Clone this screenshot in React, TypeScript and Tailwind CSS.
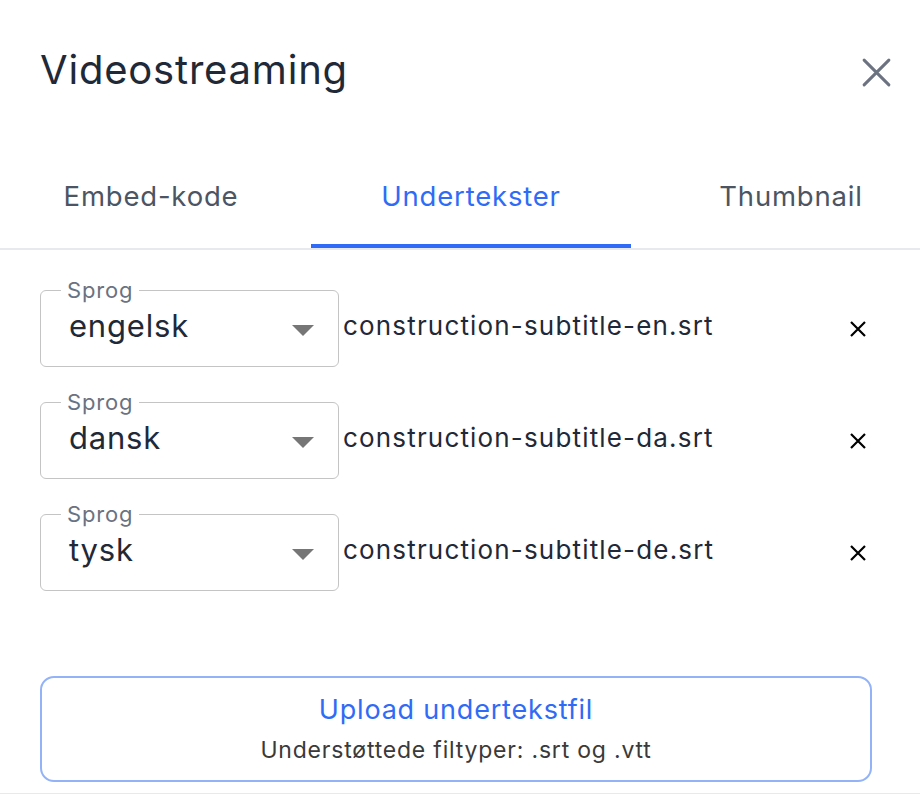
import React, { useState } from 'react';

const rows = [
  { lang: 'engelsk', file: 'construction-subtitle-en.srt' },
  { lang: 'dansk', file: 'construction-subtitle-da.srt' },
  { lang: 'tysk', file: 'construction-subtitle-de.srt' },
];

const tabs = ['Embed-kode', 'Undertekster', 'Thumbnail'];

export default function App() {
  const [active, setActive] = useState(1);

  return (
    <div className="w-[920px] h-[794px] bg-white overflow-hidden font-['Inter',sans-serif] tracking-[0.05em] text-[#1f2937]">
      <div className="flex items-center justify-between pl-10 pr-[22px] h-[144px]">
        <h2 className="text-[40px] leading-none -mt-1">Videostreaming</h2>
        <button className="w-11 h-11 flex items-center justify-center text-[#6b7280]">
          <svg width="33" height="33" viewBox="0 0 24 24" fill="none" stroke="currentColor" strokeWidth="2.2" strokeLinecap="round">
            <path d="M3 3l18 18M21 3L3 21" />
          </svg>
        </button>
      </div>

      <div className="border-b-2 border-[#e8e9ee] overflow-hidden">
        <div className="flex -ml-[9px] w-[960px]">
          {tabs.map((t, i) => (
            <button
              key={t}
              onClick={() => setActive(i)}
              className={`w-[320px] shrink-0 h-[104px] pt-[6px] text-[27.5px] flex items-center justify-center border-b-4 ${
                i === active ? 'text-[#2f6bf6] border-[#2f6bf6]' : 'text-[#4b5563] border-transparent'
              }`}
            >
              {t}
            </button>
          ))}
        </div>
      </div>

      <div className="pl-10 pr-[50px] pt-[40px] flex flex-col gap-[35px]">
        {rows.map(r => (
          <div key={r.file} className="flex items-center">
            <div className="relative w-[299px] h-[77px] border border-[#c4c4c4] rounded-[6px] flex items-center pl-7 pr-6 shrink-0">
              <span className="absolute -top-[15px] left-[20px] px-[6px] bg-white text-[22px] leading-[28px] text-[#6b7280]">Sprog</span>
              <span className="flex-1 text-[31px] -mt-1">{r.lang}</span>
              <svg width="22" height="11" viewBox="0 0 22 11" className="mt-1">
                <path d="M0 0h22L11 11z" fill="#767676" />
              </svg>
            </div>
            <div className="flex-1 pl-1 text-[26px] -mt-[6px] tracking-[0.045em]">{r.file}</div>
            <button className="w-6 h-6 flex items-center justify-center text-black">
              <svg width="18" height="18" viewBox="0 0 18 18" fill="none" stroke="currentColor" strokeWidth="2.2">
                <path d="M2 2l14 14M16 2L2 16" />
              </svg>
            </button>
          </div>
        ))}
      </div>

      <div className="px-10 pt-[85px]">
        <button className="w-[832px] h-[106px] border-2 border-[#93b3f8] rounded-[14px] flex flex-col items-center justify-center gap-[16px]">
          <span className="text-[27px] leading-none text-[#2f6bf6]">Upload undertekstfil</span>
          <span className="text-[23px] leading-none text-[#3a3a3a]">Understøttede filtyper: .srt og .vtt</span>
        </button>
      </div>
      <div className="mt-[11px] border-t border-[#e8e9ee]" />
    </div>
  );
}
